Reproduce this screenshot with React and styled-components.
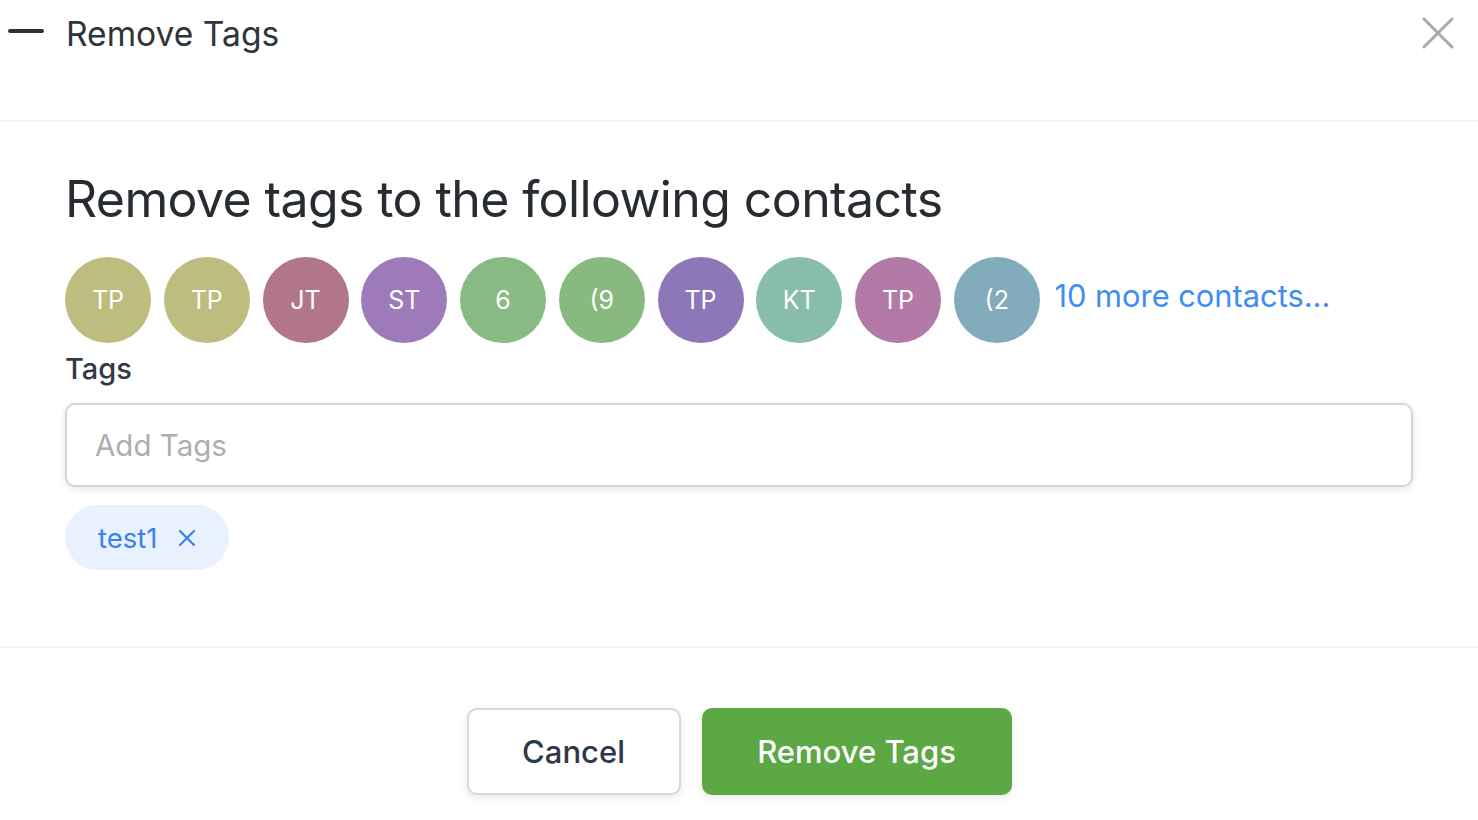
import React from "react";
import styled, { createGlobalStyle } from "styled-components";

const GlobalStyle = createGlobalStyle`
  html, body {
    margin: 0;
    padding: 0;
    background: #ffffff;
    font-family: Inter, "Noto Sans", "Liberation Sans", sans-serif;
  }
  * {
    box-sizing: border-box;
  }
`;

const contacts = [
  { initials: "TP", color: "#bdbd80" },
  { initials: "TP", color: "#bdbd80" },
  { initials: "JT", color: "#b27689" },
  { initials: "ST", color: "#9d7ab9" },
  { initials: "6", color: "#88ba83" },
  { initials: "(9", color: "#88ba7f" },
  { initials: "TP", color: "#8d77b9" },
  { initials: "KT", color: "#88bcab" },
  { initials: "TP", color: "#b379a7" },
  { initials: "(2", color: "#82acbb" },
];

export default function App() {
  return (
    <>
      <GlobalStyle />
      <Modal>
        <Header>
          <TitleGroup>
            <MinusIcon />
            <Title>Remove Tags</Title>
          </TitleGroup>
          <CloseButton aria-label="Close">
            <svg width="32" height="32" viewBox="0 0 32 32">
              <path
                d="M2 2 L30 30 M30 2 L2 30"
                stroke="#a3abb1"
                strokeWidth="3"
                strokeLinecap="round"
              />
            </svg>
          </CloseButton>
        </Header>

        <Body>
          <Heading>Remove tags to the following contacts</Heading>
          <AvatarRow>
            {contacts.map((c, i) => (
              <Avatar key={i} $color={c.color}>
                {c.initials}
              </Avatar>
            ))}
            <MoreLink>10 more contacts...</MoreLink>
          </AvatarRow>

          <Label>Tags</Label>
          <TagInput placeholder="Add Tags" />

          <ChipRow>
            <Chip>
              test1
              <svg width="18" height="18" viewBox="0 0 18 18">
                <path
                  d="M2 2 L16 16 M16 2 L2 16"
                  stroke="#3b82e6"
                  strokeWidth="2.2"
                  strokeLinecap="round"
                />
              </svg>
            </Chip>
          </ChipRow>
        </Body>

        <Footer>
          <CancelButton>Cancel</CancelButton>
          <PrimaryButton>Remove Tags</PrimaryButton>
        </Footer>
      </Modal>
    </>
  );
}

const Modal = styled.div`
  width: 1478px;
  height: 820px;
  display: flex;
  flex-direction: column;
  background: #ffffff;
`;

const Header = styled.div`
  height: 122px;
  display: flex;
  align-items: flex-start;
  justify-content: space-between;
  padding: 12px 24px 0 8px;
  border-bottom: 2px solid #f1f3f6;
`;

const TitleGroup = styled.div`
  display: flex;
  align-items: center;
  gap: 22px;
`;

const MinusIcon = styled.span`
  display: block;
  width: 36px;
  height: 4px;
  border-radius: 2px;
  background: #2b3238;
  margin-top: -6px;
`;

const Title = styled.h1`
  margin: 0;
  font-size: 33.6px;
  font-weight: 400;
  line-height: 44px;
  color: #2e353b;
`;

const CloseButton = styled.button`
  border: none;
  background: transparent;
  padding: 0;
  margin-top: 5px;
  cursor: pointer;
  display: flex;
`;

const Body = styled.div`
  padding: 46px 65px 0 65px;
  height: 526px;
  border-bottom: 2px solid #f3f5f8;
`;

const Heading = styled.h2`
  margin: 0;
  font-size: 50px;
  font-weight: 400;
  line-height: 62px;
  color: #262c31;
  letter-spacing: -0.6px;
`;

const AvatarRow = styled.div`
  display: flex;
  align-items: center;
  gap: 12.75px;
  margin-top: 27px;
`;

const Avatar = styled.div`
  width: 86px;
  height: 86px;
  border-radius: 50%;
  flex: none;
  background: ${(p) => p.$color};
  color: #ffffff;
  display: flex;
  align-items: center;
  justify-content: center;
  font-size: 25px;
`;

const MoreLink = styled.a`
  margin-left: 2px;
  margin-top: -10px;
  font-size: 30.8px;
  color: #3d8ef0;
  cursor: pointer;
`;

const Label = styled.div`
  margin-top: 8px;
  font-size: 29px;
  font-weight: 500;
  line-height: 36px;
  color: #2f3a45;
`;

const TagInput = styled.input`
  display: block;
  margin-top: 16px;
  width: 100%;
  height: 84px;
  border: 2px solid #d3d7dc;
  border-radius: 10px;
  padding: 0 28px;
  font-family: inherit;
  font-size: 29.5px;
  color: #2f3a45;
  box-shadow: 0 2px 6px rgba(30, 40, 60, 0.12);
  outline: none;

  &::placeholder {
    color: #a9afb5;
  }
`;

const ChipRow = styled.div`
  display: flex;
  margin-top: 18px;
`;

const Chip = styled.span`
  display: inline-flex;
  align-items: center;
  gap: 21px;
  height: 65px;
  padding: 0 33px 0 33px;
  border-radius: 33px;
  background: #e8f1fd;
  color: #3b82e6;
  font-size: 27.5px;
`;

const Footer = styled.div`
  flex: 1;
  display: flex;
  justify-content: center;
  align-items: flex-start;
  gap: 21px;
  padding-top: 60px;
`;

const BaseButton = styled.button`
  height: 87px;
  border-radius: 10px;
  font-family: inherit;
  font-size: 31px;
  cursor: pointer;
  box-shadow: 0 3px 8px rgba(30, 40, 60, 0.1);
`;

const CancelButton = styled(BaseButton)`
  width: 214px;
  background: #ffffff;
  border: 2px solid #d5d8de;
  color: #2f3749;
  font-weight: 500;
`;

const PrimaryButton = styled(BaseButton)`
  width: 310px;
  background: #5ca845;
  border: none;
  color: #ffffff;
  font-weight: 500;
`;
